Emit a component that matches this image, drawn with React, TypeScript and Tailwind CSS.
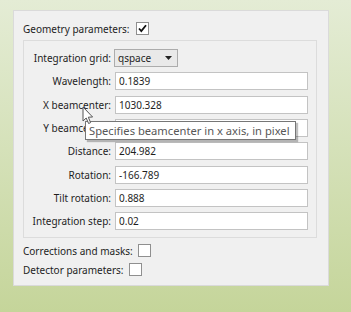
import React from "react";

const font = { fontFamily: '"Noto Sans", "Open Sans", sans-serif' };

function Check({ checked }: { checked?: boolean }) {
  return (
    <div className="w-[13px] h-[13px] border border-[#8f8f8f] bg-white flex items-center justify-center shrink-0">
      {checked && (
        <svg width="11" height="11" viewBox="0 0 11 11">
          <path d="M2 5.5 L4.3 8 L9 2.2" fill="none" stroke="#111" strokeWidth="1.8" />
        </svg>
      )}
    </div>
  );
}

const rows: [string, string][] = [
  ["Wavelength:", "0.1839"],
  ["X beamcenter:", "1030.328"],
  ["Y beamcenter:", ""],
  ["Distance:", "204.982"],
  ["Rotation:", "-166.789"],
  ["Tilt rotation:", "0.888"],
  ["Integration step:", "0.02"],
];

export default function App() {
  return (
    <div
      className="relative w-[351px] h-[312px] overflow-hidden bg-gradient-to-b from-[#e4ecd5] to-[#c5d59a] pt-[10px] pl-[13px] text-[10px] text-[#1e1e1e]"
      style={font}
    >
      <div className="w-[316px] h-[276px] bg-[#f0f0f0] border border-[#dadada] pt-[11px] pl-[9px] flex flex-col">
        <div className="flex items-center h-[13px] gap-[6px]">
          <span className="leading-none">Geometry parameters:</span>
          <Check checked />
        </div>
        <div className="mt-[5px] w-[294px] h-[198px] border border-[#dcdcdc] pt-[8px] flex flex-col gap-[5.33px]">
          <div className="flex items-center h-[18px]">
            <span className="w-[87px] text-right leading-none">Integration grid:</span>
            <div className="ml-[3px] w-[64px] h-[18px] border border-[#acacac] bg-[#e9e9e9] flex items-center pl-[3px] justify-between pr-[5px]">
              <span className="leading-none">qspace</span>
              <svg width="7" height="4" viewBox="0 0 7 4">
                <path d="M0 0 L7 0 L3.5 4 Z" fill="#222" />
              </svg>
            </div>
          </div>
          {rows.map(([l, v]) => (
            <div key={l} className="flex items-center h-[18px]">
              <span className="w-[87px] text-right leading-none whitespace-nowrap">{l}</span>
              <div className="ml-[4px] w-[193px] h-[18px] border border-[#c3c3c3] bg-white flex items-center pl-[3px]">
                <span className="leading-none">{v}</span>
              </div>
            </div>
          ))}
        </div>
        <div className="mt-[6px] flex items-center h-[13px] gap-[5px]">
          <span className="leading-none">Corrections and masks:</span>
          <Check />
        </div>
        <div className="mt-[6px] flex items-center h-[13px] gap-[5px]">
          <span className="leading-none">Detector parameters:</span>
          <Check />
        </div>
      </div>

      <div className="absolute left-[85px] top-[121px] w-[211px] h-[19px] bg-white border border-[#767676] shadow-[2px_2px_1px_rgba(0,0,0,0.25)] flex items-center pl-[3px] text-[11.2px] text-[#575757]">
        <span className="leading-none whitespace-nowrap">Specifies beamcenter in x axis, in pixel</span>
      </div>

      <svg className="absolute left-[82px] top-[106px]" width="12" height="19" viewBox="0 0 12 19">
        <path d="M1 1 L1 15 L4.2 12 L6.6 17.5 L8.6 16.6 L6.3 11.2 L10.6 11 Z" fill="#fff" stroke="#555" strokeWidth="1" strokeLinejoin="round" />
      </svg>
    </div>
  );
}
